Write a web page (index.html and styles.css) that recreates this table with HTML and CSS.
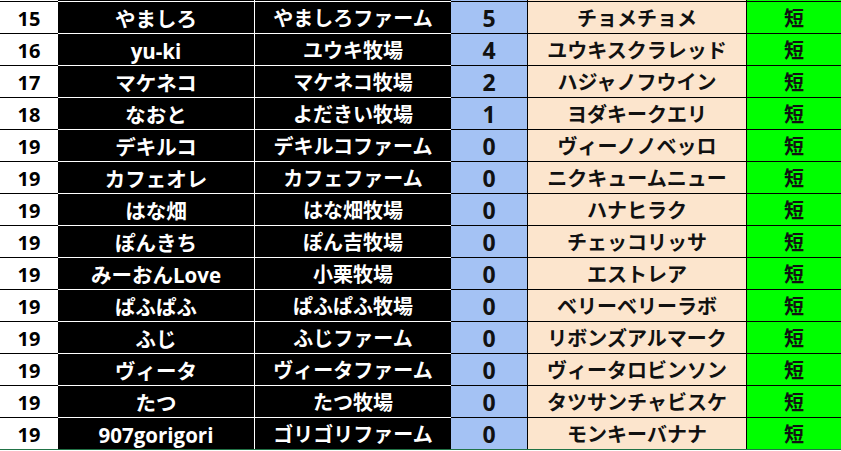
FILE: index.html
```html
<!DOCTYPE html>
<html lang="ja">
<head>
<meta charset="utf-8">
<link rel="stylesheet" href="styles.css">
</head>
<body>
<div class="sheet">
  <div class="cap rank"></div><div class="cap name"></div><div class="cap farm"></div><div class="cap pts"></div><div class="cap horse"></div><div class="cap dist"></div>

  <div class="c rank">15</div><div class="c name">やましろ</div><div class="c farm">やましろファーム</div><div class="c pts">5</div><div class="c horse">チョメチョメ</div><div class="c dist">短</div>
  <div class="c rank">16</div><div class="c name">yu-ki</div><div class="c farm">ユウキ牧場</div><div class="c pts">4</div><div class="c horse">ユウキスクラレッド</div><div class="c dist">短</div>
  <div class="c rank">17</div><div class="c name">マケネコ</div><div class="c farm">マケネコ牧場</div><div class="c pts">2</div><div class="c horse">ハジャノフウイン</div><div class="c dist">短</div>
  <div class="c rank">18</div><div class="c name">なおと</div><div class="c farm">よだきい牧場</div><div class="c pts">1</div><div class="c horse">ヨダキークエリ</div><div class="c dist">短</div>
  <div class="c rank">19</div><div class="c name">デキルコ</div><div class="c farm">デキルコファーム</div><div class="c pts">0</div><div class="c horse">ヴィーノノベッロ</div><div class="c dist">短</div>
  <div class="c rank">19</div><div class="c name">カフェオレ</div><div class="c farm">カフェファーム</div><div class="c pts">0</div><div class="c horse">ニクキュームニュー</div><div class="c dist">短</div>
  <div class="c rank">19</div><div class="c name">はな畑</div><div class="c farm">はな畑牧場</div><div class="c pts">0</div><div class="c horse">ハナヒラク</div><div class="c dist">短</div>
  <div class="c rank">19</div><div class="c name">ぽんきち</div><div class="c farm">ぽん吉牧場</div><div class="c pts">0</div><div class="c horse">チェッコリッサ</div><div class="c dist">短</div>
  <div class="c rank">19</div><div class="c name">みーおんLove</div><div class="c farm">小栗牧場</div><div class="c pts">0</div><div class="c horse">エストレア</div><div class="c dist">短</div>
  <div class="c rank">19</div><div class="c name">ぱふぱふ</div><div class="c farm">ぱふぱふ牧場</div><div class="c pts">0</div><div class="c horse">ベリーベリーラボ</div><div class="c dist">短</div>
  <div class="c rank">19</div><div class="c name">ふじ</div><div class="c farm">ふじファーム</div><div class="c pts">0</div><div class="c horse">リボンズアルマーク</div><div class="c dist">短</div>
  <div class="c rank">19</div><div class="c name">ヴィータ</div><div class="c farm">ヴィータファーム</div><div class="c pts">0</div><div class="c horse">ヴィータロビンソン</div><div class="c dist">短</div>
  <div class="c rank">19</div><div class="c name">たつ</div><div class="c farm">たつ牧場</div><div class="c pts">0</div><div class="c horse">タツサンチャビスケ</div><div class="c dist">短</div>
  <div class="c rank">19</div><div class="c name">907gorigori</div><div class="c farm">ゴリゴリファーム</div><div class="c pts">0</div><div class="c horse">モンキーバナナ</div><div class="c dist">短</div>

  <div class="foot"></div>
</div>
</body>
</html>
```

FILE: styles.css
```css
html, body {
  margin: 0;
  padding: 0;
  background: #ffffff;
  overflow: hidden;
}

.sheet {
  display: grid;
  grid-template-columns: 58px 197px 196px 77px 219px 94px;
  grid-template-rows: 1px repeat(14, 32px) 1px 1px;
  width: 841px;
  font-family: "Open Sans", "Noto Sans CJK JP", sans-serif;
  font-weight: 700;
  font-size: 20px;
}

.c {
  display: flex;
  align-items: center;
  justify-content: center;
  padding-top: 3px;
  box-sizing: border-box;
  border-top: 1px solid #000000;
  line-height: 1;
  white-space: nowrap;
  overflow: hidden;
}

.rank { background: #ffffff; color: #000000; }
.name { background: #000000; color: #ffffff; border-top-color: #ffffff; border-right: 1px solid #ffffff; }
.name.c { font-size: 20.5px; }
.farm { background: #000000; color: #ffffff; border-top-color: #ffffff; }
.pts { background: #a4c2f4; color: #111111; border-right: 1px solid #000000; }
.pts.c { font-size: 23px; padding-top: 2px; }
.horse { background: #fce5cd; color: #111111; border-right: 1px solid #000000; }
.dist { background: #00ff00; color: #111111; }

.cap { box-sizing: border-box; }

.foot {
  grid-column: 1 / -1;
  background: #217346;
}
```
